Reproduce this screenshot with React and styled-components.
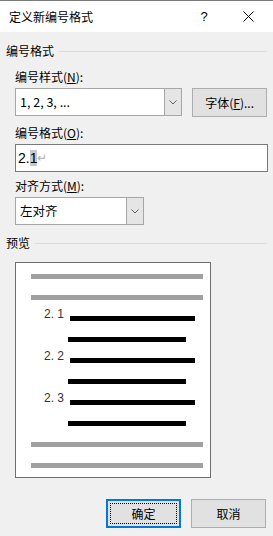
import styled, { createGlobalStyle } from "styled-components"

const GlobalStyle = createGlobalStyle`
html, body {
    margin: 0;
    padding: 0;
    background: #f0f0f0;
}
body {
    font-family: "Noto Sans CJK SC", "Microsoft YaHei", "Liberation Sans", sans-serif;
    font-size: 12px;
    color: #000;
}
`

const Window = styled.div`
width: 273px;
height: 536px;
background: #f0f0f0;
border-top: 1px solid #7a7a7a;
box-sizing: border-box;
overflow: hidden;
`

const TitleBar = styled.div`
height: 31px;
background: #fff;
display: flex;
align-items: center;
padding-left: 9px;
& .title { flex: 1; font-size: 12px; line-height: 16px; }
& .help { width: 14px; text-align: center; font-size: 13px; margin-right: 30px; font-family: "Liberation Sans", sans-serif; }
& .close { width: 14px; height: 14px; margin-right: 18px; display: flex; align-items: center; justify-content: center; }
`

const Body = styled.div`
padding: 0 6px;
display: flex;
flex-direction: column;
`

const GroupHeader = styled.div`
display: flex;
align-items: center;
margin-top: ${p => p.$top}px;
line-height: 16px;
& .line { flex: 1; height: 1px; background: #dcdcdc; margin-left: 5px; margin-top: 1px; }
`

const Section = styled.div`
padding-left: 9px;
display: flex;
flex-direction: column;
`

const Label = styled.div`
line-height: 16px;
margin-top: ${p => p.$top}px;
margin-bottom: 3px;
`

const Row = styled.div`
display: flex;
gap: 10px;
`

const Combo = styled.div`
width: ${p => p.$width}px;
height: 28px;
box-sizing: border-box;
border: 1px solid #a6a6a6;
background: #fff;
display: flex;
& .value { flex: 1; padding-left: 4px; line-height: 26px; font-size: 12.5px; }
& .arrow {
    width: 16px;
    background: #e5e5e5;
    border-left: 1px solid #a6a6a6;
    display: flex;
    align-items: center;
    justify-content: center;
}
`

const Button = styled.button`
width: 75px;
height: 29px;
box-sizing: border-box;
background: #e1e1e1;
border: 1px solid #adadad;
font-family: inherit;
font-size: 12px;
color: #000;
padding: 0;
display: flex;
align-items: center;
justify-content: center;
`

const DefaultButton = styled(Button)`
border: 2px solid #0078d7;
& .focus {
    width: 67px;
    height: 21px;
    box-sizing: border-box;
    border: 1px dotted #000;
    display: flex;
    align-items: center;
    justify-content: center;
}
`

const TextInput = styled.div`
width: 253px;
height: 28px;
box-sizing: border-box;
border: 1px solid #7a7a7a;
background: #fff;
padding-left: 2px;
display: flex;
align-items: center;
font-family: "Liberation Sans", sans-serif;
font-size: 14px;
& .sel { background: #c8c8c8; }
& .ret { color: #b0b0b0; font-size: 12px; }
`

const Preview = styled.div`
width: 196px;
height: 216px;
box-sizing: border-box;
margin-top: 11px;
border: 1px solid #6e6e6e;
background: #fff;
padding: 11px 0 0 15px;
display: flex;
flex-direction: column;
gap: 16px;
`

const Line = styled.div`
height: 5px;
display: flex;
align-items: flex-end;
padding-left: ${p => p.$indent}px;
& .num {
    width: 26px;
    font-family: "Liberation Sans", sans-serif;
    font-size: 12px;
    line-height: 12px;
    color: #333;
    margin-bottom: 1px;
    white-space: nowrap;
}
& .bar {
    width: ${p => p.$width}px;
    height: 5px;
    background: ${p => (p.$gray ? "#a0a0a0" : "#000")};
}
`

const Footer = styled.div`
display: flex;
justify-content: flex-end;
gap: 10px;
margin-top: 21px;
padding-right: 1px;
`

const Chevron = () => (
    <svg width="8" height="5" viewBox="0 0 8 5">
        <path d="M0.5 0.5 L4 4 L7.5 0.5" fill="none" stroke="#606060" strokeWidth="1" />
    </svg>
)

const CloseIcon = () => (
    <svg width="11" height="11" viewBox="0 0 11 11">
        <path d="M0.5 0.5 L10.5 10.5 M10.5 0.5 L0.5 10.5" stroke="#000" strokeWidth="1" />
    </svg>
)

const previewLines = [
    { gray: true, indent: 0, width: 172 },
    { gray: true, indent: 0, width: 172 },
    { num: "2. 1", indent: 13, width: 125 },
    { indent: 37, width: 118 },
    { num: "2. 2", indent: 13, width: 125 },
    { indent: 37, width: 118 },
    { num: "2. 3", indent: 13, width: 125 },
    { indent: 37, width: 118 },
    { gray: true, indent: 0, width: 172 },
    { gray: true, indent: 0, width: 172 },
]

export default function App() {
    return (
        <Window>
            <GlobalStyle />
            <TitleBar>
                <div className="title">定义新编号格式</div>
                <div className="help">?</div>
                <div className="close"><CloseIcon /></div>
            </TitleBar>
            <Body>
                <GroupHeader $top={11}>
                    <span>编号格式</span>
                    <div className="line" />
                </GroupHeader>
                <Section>
                    <Label $top={10}>编号样式(<u>N</u>):</Label>
                    <Row>
                        <Combo $width={168}>
                            <div className="value">1, 2, 3, ...</div>
                            <div className="arrow"><Chevron /></div>
                        </Combo>
                        <Button>字体(<u>F</u>)...</Button>
                    </Row>
                    <Label $top={8}>编号格式(<u>O</u>):</Label>
                    <TextInput>
                        <span>2.</span><span className="sel">1</span><span className="ret">↵</span>
                    </TextInput>
                    <Label $top={6}>对齐方式(<u>M</u>):</Label>
                    <Combo $width={129}>
                        <div className="value">左对齐</div>
                        <div className="arrow"><Chevron /></div>
                    </Combo>
                </Section>
                <GroupHeader $top={10}>
                    <span>预览</span>
                    <div className="line" />
                </GroupHeader>
                <Section>
                    <Preview>
                        {previewLines.map((l, i) => (
                            <Line key={i} $indent={l.indent} $width={l.width} $gray={l.gray}>
                                {l.num && <span className="num">{l.num}</span>}
                                <div className="bar" />
                            </Line>
                        ))}
                    </Preview>
                </Section>
                <Footer>
                    <DefaultButton><span className="focus">确定</span></DefaultButton>
                    <Button>取消</Button>
                </Footer>
            </Body>
        </Window>
    )
}
